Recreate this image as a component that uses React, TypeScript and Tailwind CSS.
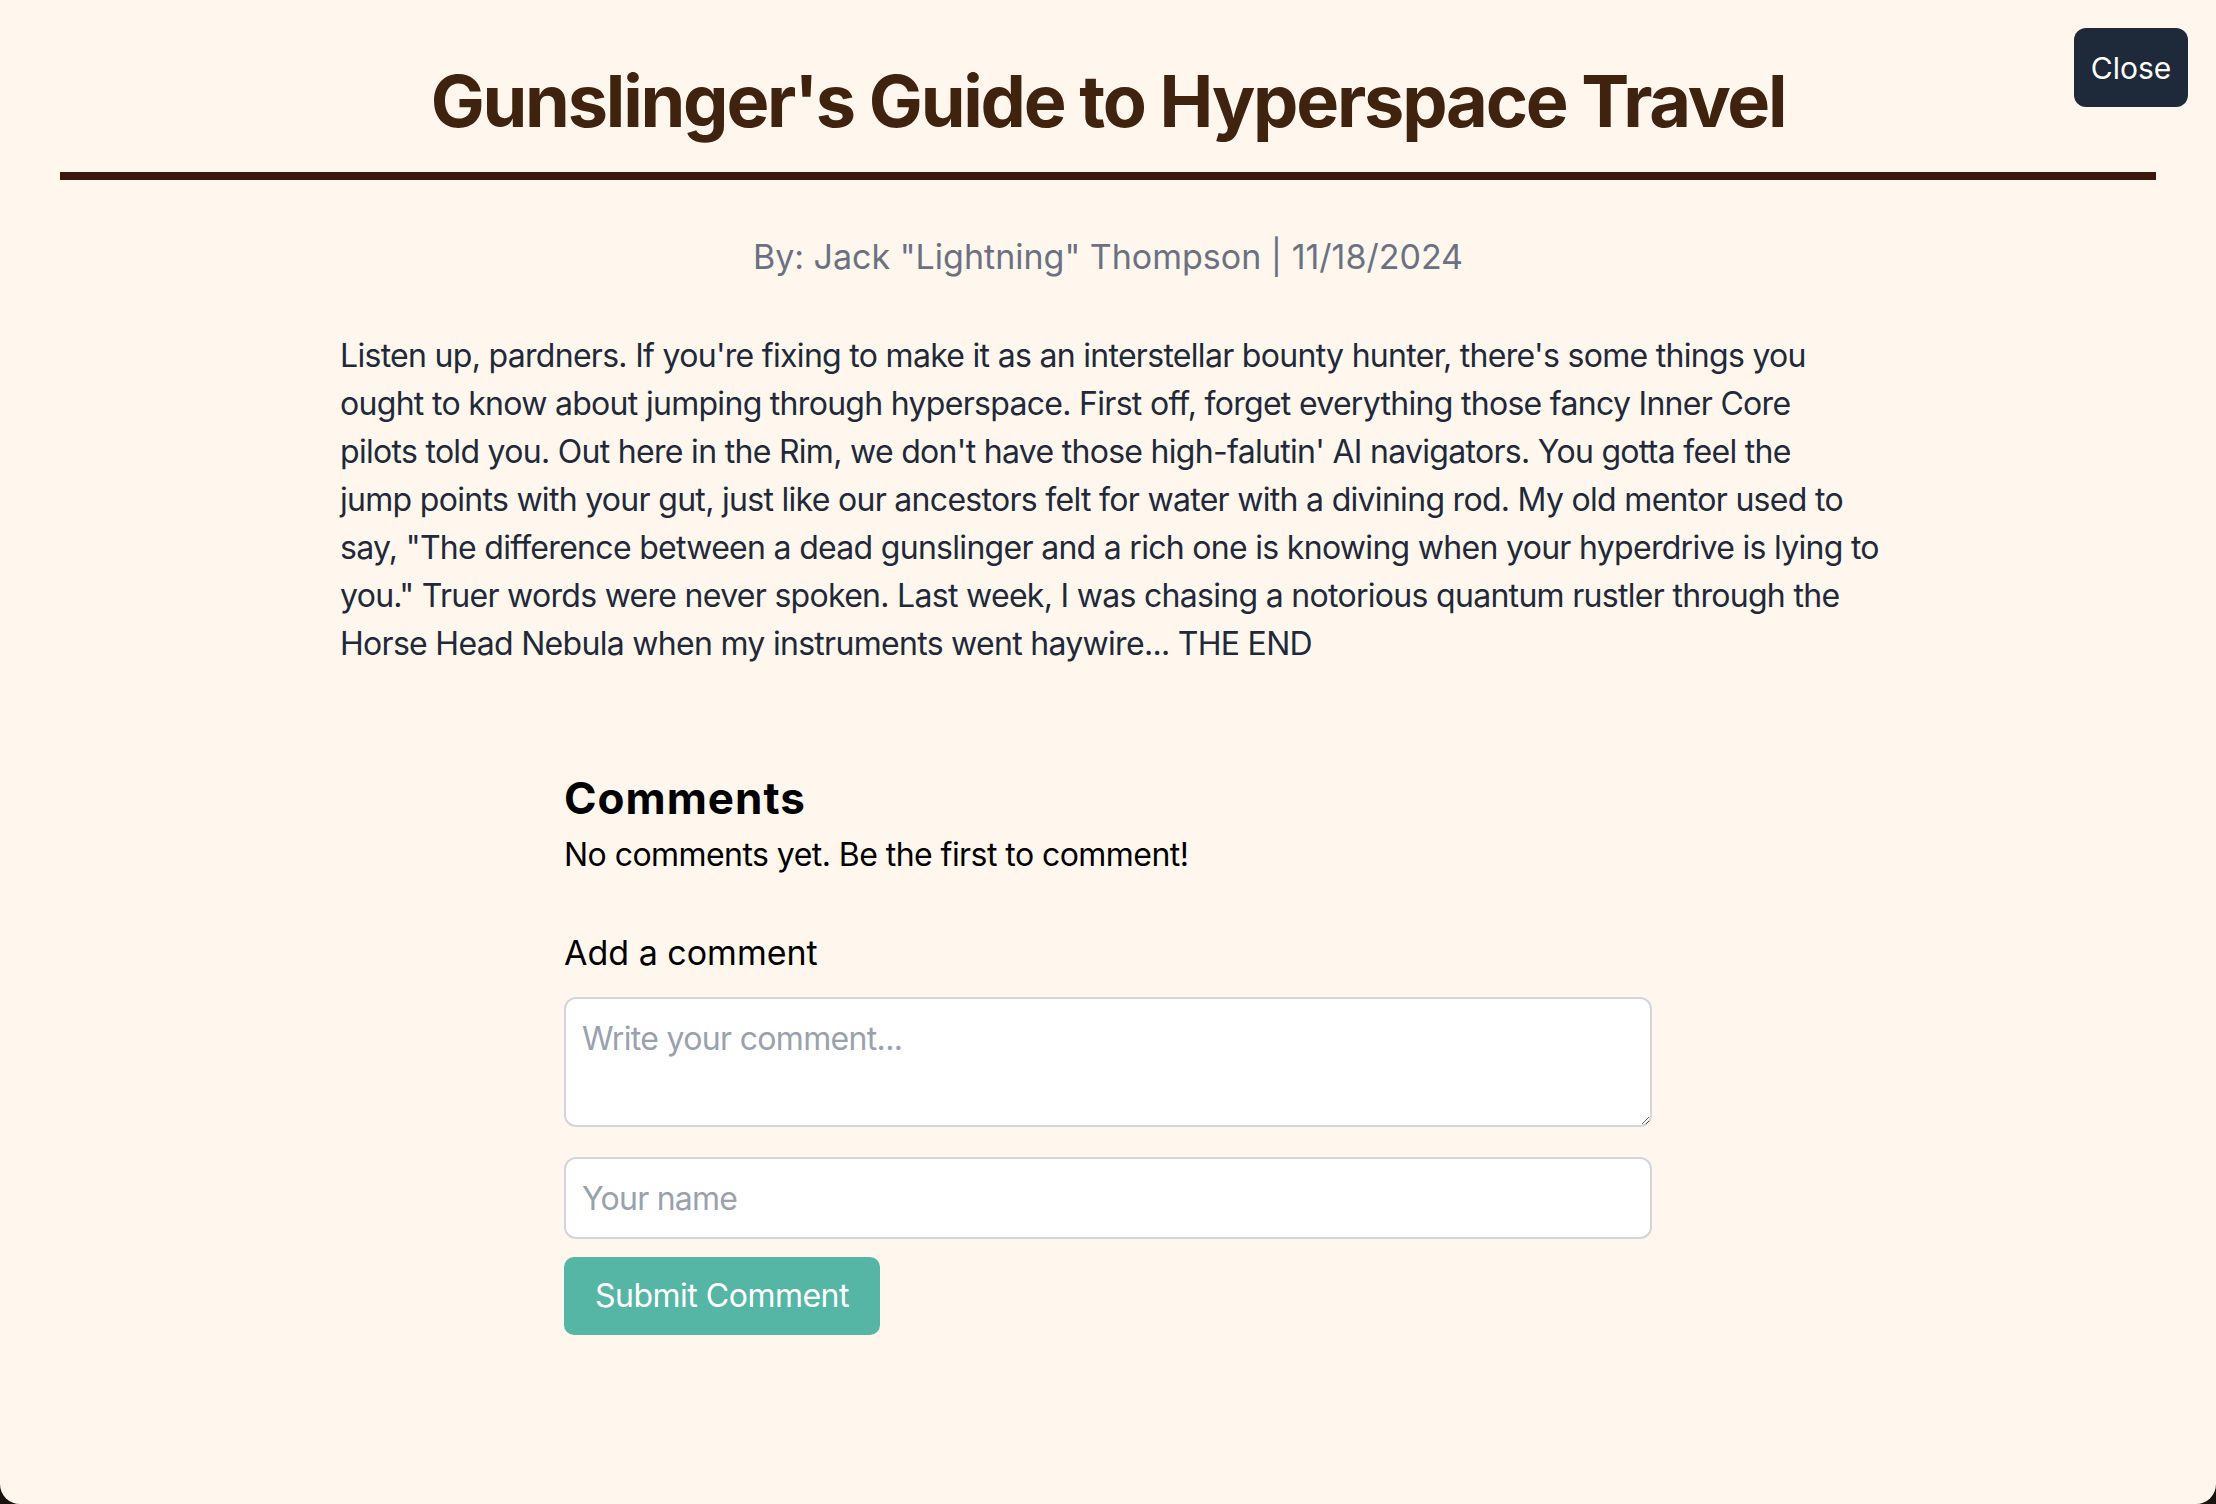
import React from "react";

const bodyLines = [
  "Listen up, pardners. If you're fixing to make it as an interstellar bounty hunter, there's some things you",
  "ought to know about jumping through hyperspace. First off, forget everything those fancy Inner Core",
  "pilots told you. Out here in the Rim, we don't have those high-falutin' AI navigators. You gotta feel the",
  "jump points with your gut, just like our ancestors felt for water with a divining rod. My old mentor used to",
  "say, \"The difference between a dead gunslinger and a rich one is knowing when your hyperdrive is lying to",
  "you.\" Truer words were never spoken. Last week, I was chasing a notorious quantum rustler through the",
  "Horse Head Nebula when my instruments went haywire... THE END",
];

export default function App() {
  const font = { fontFamily: "Inter, 'Noto Sans', sans-serif" };
  return (
    <div className="w-full h-[1504px] bg-[#1a1411]" style={font}>
      <div className="relative h-[1504px] bg-orange-50 rounded-b-[20px] overflow-hidden">
        <button className="absolute top-[28px] right-[28px] w-[114px] h-[79px] flex items-center justify-center rounded-[12px] bg-gray-800 text-white text-[30px] leading-none">
          Close
        </button>

        <div className="px-[60px] pt-[61px]">
          <h1 className="text-center text-[72px] leading-[80px] font-bold tracking-[-2.2px] text-[#40230f] pb-[31px] border-b-[8px] border-[#3d180c]">
            Gunslinger's Guide to Hyperspace Travel
          </h1>
        </div>

        <p className="mt-[52px] text-center text-[34px] leading-[50px] text-gray-500">
          By: Jack "Lightning" Thompson | 11/18/2024
        </p>

        <div className="mx-auto w-[1536px] mt-[50px]">
          <p className="text-[32px] leading-[48px] tracking-[-0.7px] text-gray-800">
            {bodyLines.map((line, i) => (
              <span key={i} className="block whitespace-nowrap">
                {line}
              </span>
            ))}
          </p>
        </div>

        <div className="mx-auto w-[1152px] px-[32px] mt-[100px]">
          <h2 className="text-[44px] leading-[60px] font-bold tracking-[1px] text-black">Comments</h2>
          <p className="mt-[3px] text-[32px] leading-[48px] tracking-[-0.55px] text-black">
            No comments yet. Be the first to comment!
          </p>

          <h3 className="mt-[49px] text-[34px] leading-[50px] text-black">Add a comment</h3>
          <form className="flex flex-col" onSubmit={(e) => e.preventDefault()}>
            <textarea
              placeholder="Write your comment..."
              className="mt-[19px] w-full h-[130px] rounded-[12px] border-2 border-gray-300 bg-white px-[16px] py-[16px] text-[32px] leading-[48px] tracking-[-0.67px] text-gray-800 placeholder:text-gray-400 outline-none"
            />
            <input
              type="text"
              placeholder="Your name"
              className="mt-[30px] w-full h-[82px] rounded-[12px] border-2 border-gray-300 bg-white px-[16px] py-[15px] text-[32px] leading-[48px] tracking-[-0.75px] text-gray-800 placeholder:text-gray-400 outline-none"
            />
            <div className="mt-[18px]">
              <button
                type="submit"
                className="h-[78px] w-[316px] flex items-center justify-center rounded-[10px] bg-[#56b6a6] text-white text-[32px] leading-[48px] tracking-[-0.5px]"
              >
                Submit Comment
              </button>
            </div>
          </form>
        </div>
      </div>
    </div>
  );
}
